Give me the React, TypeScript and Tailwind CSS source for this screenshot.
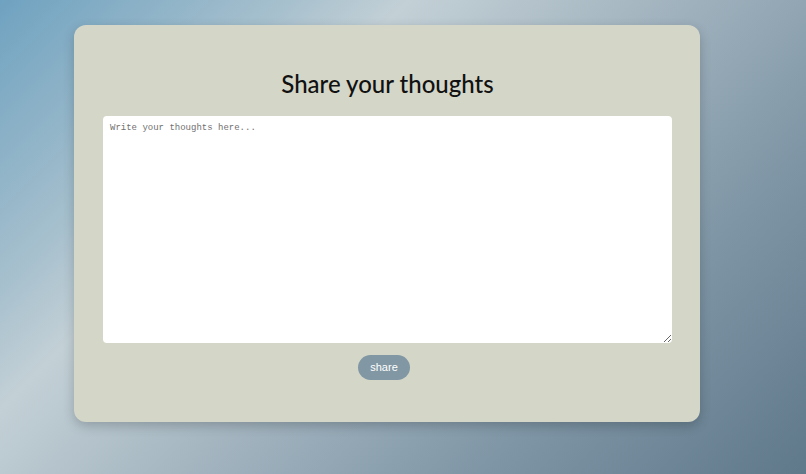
export default function App() {
  return (
    <div className="min-h-screen w-full bg-[linear-gradient(135deg,#6fa2c0_0%,#a5bfcd_22%,#c3d0d6_32%,#9eb0bc_55%,#7e95a5_75%,#5f788a_100%)] pt-[25px]">
      <div className="ml-[74px] w-[626px] h-[397px] rounded-xl bg-[#d4d6c8] shadow-[0_4px_12px_rgba(0,0,0,0.2)] flex flex-col items-center pl-[29px] pr-[28px] pt-[44px]">
        <h1 className="text-[24px] leading-[30px] font-[Lato,'Noto_Sans',sans-serif] text-[#111] font-medium">
          Share your thoughts
        </h1>
        <textarea
          placeholder="Write your thoughts here..."
          className="mt-[17px] w-full h-[227px] rounded bg-white px-[7px] py-[6px] text-[9px] leading-[13px] font-['Liberation_Mono',monospace] text-black placeholder:text-[#707070] outline-none resize-y"
        />
        <button className="mt-[12px] mr-[7px] h-[25px] w-[52px] rounded-full bg-[#8197a4] text-white text-[11px] font-['Liberation_Sans',Arial,sans-serif]">
          share
        </button>
      </div>
    </div>
  );
}
